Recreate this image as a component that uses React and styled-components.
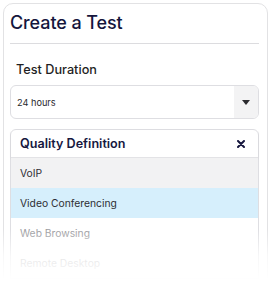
import React from "react";
import styled, { createGlobalStyle } from "styled-components";

const Global = createGlobalStyle`
  html, body { margin: 0; padding: 0; background: #ffffff; }
  body { font-family: Inter, "Noto Sans", sans-serif; overflow: hidden; }
`;

const Page = styled.div`
  width: 270px;
  height: 289px;
  overflow: hidden;
  position: relative;
  padding: 3px 0 0 3px;
  box-sizing: border-box;
`;

const Card = styled.div`
  width: 265px;
  height: 320px;
  box-sizing: border-box;
  border: 1px solid #e2e2e4;
  border-radius: 10px;
  padding: 8px 8px 0 6px;
  display: flex;
  flex-direction: column;
  background: #fff;
`;

const Title = styled.h1`
  margin: 0;
  font-size: 18px;
  line-height: 22px;
  font-weight: 500;
  color: #15163d;
  letter-spacing: -0.1px;
`;

const Divider = styled.hr`
  margin: 9px 0 0;
  border: none;
  border-top: 1px solid #dcdcdf;
  height: 0;
`;

const Label = styled.div`
  margin: 18px 0 0 6px;
  font-size: 12.7px;
  line-height: 16px;
  font-weight: 500;
  color: #1f1f24;
`;

const Select = styled.div`
  margin-top: 7px;
  height: 34px;
  box-sizing: border-box;
  border: 1px solid #dedee2;
  border-radius: 6px;
  display: flex;
  align-items: stretch;
  overflow: hidden;
`;

const SelectValue = styled.div`
  flex: 1;
  display: flex;
  align-items: center;
  padding-left: 6px;
  font-size: 9.2px;
  color: #2a2a2e;
`;

const SelectButton = styled.div`
  width: 24px;
  background: #f3f3f4;
  display: flex;
  align-items: center;
  justify-content: center;
`;

const Caret = styled.div`
  width: 0;
  height: 0;
  border-left: 4px solid transparent;
  border-right: 4px solid transparent;
  border-top: 5px solid #2b2b2e;
`;

const ListBox = styled.div`
  margin-top: 10px;
  border: 1px solid #dedee2;
  border-radius: 6px 6px 0 0;
  display: flex;
  flex-direction: column;
`;

const ListHeader = styled.div`
  height: 27px;
  display: flex;
  align-items: center;
  justify-content: space-between;
  padding: 0 13px 0 9px;
  border-bottom: 1px solid #e3e3e6;
  box-shadow: 0 1px 2px rgba(0,0,0,0.06);
  font-size: 12.6px;
  font-weight: 600;
  color: #17183f;
`;

const Close = styled.svg`
  width: 8px;
  height: 8px;
`;

const Option = styled.div`
  height: 30px;
  display: flex;
  align-items: center;
  padding-left: 9px;
  font-size: 10.3px;
  color: ${p => p.$muted ? "#9a9a9e" : "#2e2e33"};
  background: ${p => p.$bg || "#fff"};
`;

const Fade = styled.div`
  position: absolute;
  left: 0;
  right: 0;
  bottom: 0;
  height: 60px;
  background: linear-gradient(to bottom, rgba(255,255,255,0) 0%, rgba(255,255,255,0.75) 45%, #fff 85%);
  pointer-events: none;
`;

export default function App() {
  return (
    <>
      <Global />
      <Page>
        <Card>
          <Title>Create a Test</Title>
          <Divider />
          <Label>Test Duration</Label>
          <Select>
            <SelectValue>24 hours</SelectValue>
            <SelectButton><Caret /></SelectButton>
          </Select>
          <ListBox>
            <ListHeader>
              Quality Definition
              <Close viewBox="0 0 8 8">
                <path d="M1 1 L7 7 M7 1 L1 7" stroke="#17183f" strokeWidth="2" strokeLinecap="round" />
              </Close>
            </ListHeader>
            <Option $bg="#f2f2f3">VoIP</Option>
            <Option $bg="#d6effc">Video Conferencing</Option>
            <Option $muted>Web Browsing</Option>
            <Option $muted>Remote Desktop</Option>
          </ListBox>
        </Card>
        <Fade />
      </Page>
    </>
  );
}
